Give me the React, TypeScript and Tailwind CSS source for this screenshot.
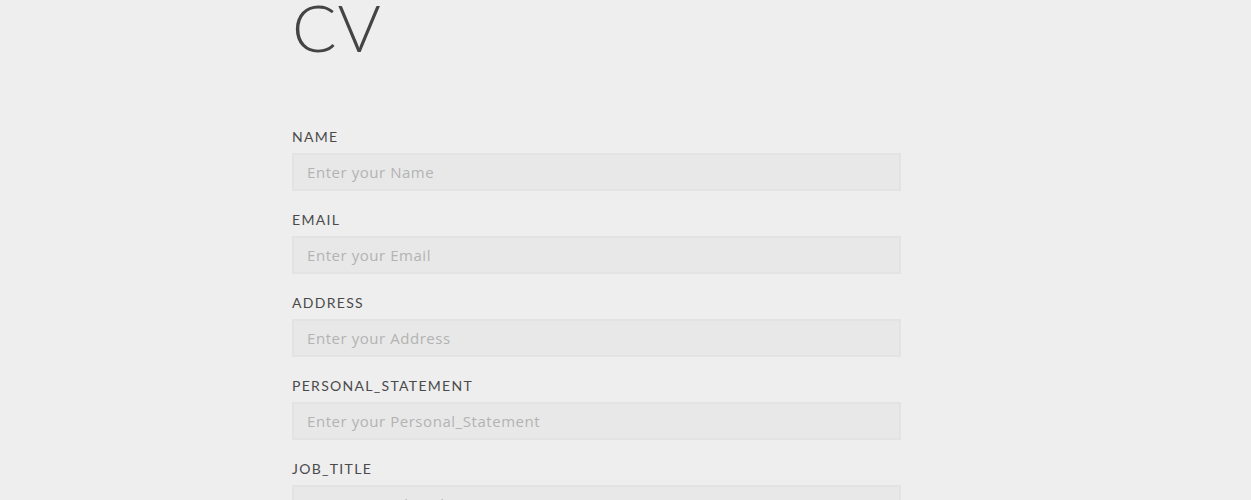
import React from 'react';

const fields = ['Name', 'Email', 'Address', 'Personal_Statement', 'Job_Title'];

export default function App() {
  return (
    <div className="min-h-[500px] bg-[#eeeeee] overflow-hidden" style={{ fontFamily: 'Lato, "Open Sans", sans-serif' }}>
      <div className="ml-[292px] w-[609px]">
        <h1 className="-mt-[6px] text-[66px] leading-[66px] font-light text-[#444444] tracking-[1px]">CV</h1>
        <form className="mt-[67px] flex flex-col gap-[19px]">
          {fields.map((f) => (
            <div key={f} className="flex flex-col gap-[6px]">
              <label className="text-[14px] leading-[20px] tracking-[1.3px] text-[#4a4a4a] uppercase">{f}</label>
              <input
                className="h-[38px] border-2 border-[#e3e3e3] bg-[#e8e8e8] px-[13px] pb-[1px] text-[15px] tracking-[0.55px] text-[#555] placeholder:text-[#b3b3b3] outline-none"
                style={{ fontFamily: '"Open Sans", Lato, sans-serif' }}
                placeholder={`Enter your ${f}`}
              />
            </div>
          ))}
        </form>
      </div>
    </div>
  );
}
